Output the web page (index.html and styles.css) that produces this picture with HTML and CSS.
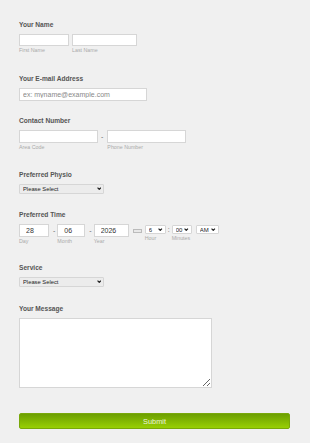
FILE: index.html
```html
<!DOCTYPE html>
<html lang="en">
<head>
  <meta charset="UTF-8">
  <title>Booking Form</title>
  <link rel="stylesheet" href="styles.css">
</head>
<body>
<div class="form">
  <div class="field">
    <div class="label">Your Name</div>
    <div class="row">
      <div class="col"><input class="txt w-first" type="text"><span class="sub">First Name</span></div>
      <div class="col"><input class="txt w-last" type="text"><span class="sub">Last Name</span></div>
    </div>
  </div>

  <div class="field mt-email">
    <div class="label">Your E-mail Address</div>
    <input class="txt w-email" type="text" placeholder="ex: myname@example.com">
  </div>

  <div class="field mt-phone">
    <div class="label">Contact Number</div>
    <div class="row">
      <div class="col"><input class="txt w-phone" type="text"><span class="sub">Area Code</span></div>
      <span class="sep">-</span>
      <div class="col"><input class="txt w-phone" type="text"><span class="sub">Phone Number</span></div>
    </div>
  </div>

  <div class="field mt-physio">
    <div class="label">Preferred Physio</div>
    <div class="sel">
      <select class="pick w-pick"><option>Please Select</option></select>
      <svg class="chev" viewBox="0 0 8 5"><path d="M1 1 L4 4 L7 1"/></svg>
    </div>
  </div>

  <div class="field mt-time">
    <div class="label">Preferred Time</div>
    <div class="row">
      <div class="col"><input class="txt num w-day" type="text" value="28"><span class="sub">Day</span></div>
      <span class="sep sep-date">-</span>
      <div class="col"><input class="txt num w-month" type="text" value="06"><span class="sub">Month</span></div>
      <span class="sep sep-date">-</span>
      <div class="col"><input class="txt num w-year" type="text" value="2026"><span class="sub">Year</span></div>
      <span class="cal"></span>
      <div class="col hour">
        <div class="sel">
          <select class="pick small w-hour"><option>6</option></select>
          <svg class="chev" viewBox="0 0 8 5"><path d="M1 1 L4 4 L7 1"/></svg>
        </div>
        <span class="sub">Hour</span>
      </div>
      <span class="sep sep-colon">:</span>
      <div class="col">
        <div class="sel">
          <select class="pick small w-min"><option>00</option></select>
          <svg class="chev" viewBox="0 0 8 5"><path d="M1 1 L4 4 L7 1"/></svg>
        </div>
        <span class="sub">Minutes</span>
      </div>
      <div class="col ampm">
        <div class="sel">
          <select class="pick small w-ampm"><option>AM</option></select>
          <svg class="chev" viewBox="0 0 8 5"><path d="M1 1 L4 4 L7 1"/></svg>
        </div>
      </div>
    </div>
  </div>

  <div class="field mt-service">
    <div class="label">Service</div>
    <div class="sel">
      <select class="pick w-pick"><option>Please Select</option></select>
      <svg class="chev" viewBox="0 0 8 5"><path d="M1 1 L4 4 L7 1"/></svg>
    </div>
  </div>

  <div class="field mt-message">
    <div class="label">Your Message</div>
    <textarea class="msg"></textarea>
  </div>

  <button class="submit" type="button">Submit</button>
</div>
</body>
</html>
```

FILE: styles.css
```css
* {
  box-sizing: border-box;
}

body {
  margin: 0;
  background: #f0f0f0;
  font-family: "Liberation Sans", Arial, sans-serif;
}

.form {
  padding: 21px 0 0 19px;
}

.label {
  font-size: 6.6px;
  font-weight: bold;
  color: #555;
  line-height: 8px;
  margin-bottom: 5px;
}

.mt-email { margin-top: 21px; }
.mt-phone { margin-top: 16px; }
.mt-physio { margin-top: 20px; }
.mt-time { margin-top: 17px; }
.mt-service { margin-top: 19px; }
.mt-message { margin-top: 18px; }

.row {
  display: flex;
  align-items: flex-start;
}

.col {
  display: flex;
  flex-direction: column;
  align-items: flex-start;
  margin-right: 3px;
}

.sub {
  font-size: 5.3px;
  color: #aaa;
  line-height: 7px;
  padding-top: 1px;
}

.txt {
  display: block;
  height: 13px;
  margin: 0;
  padding: 0 3px;
  border: 1px solid #d6d6d6;
  background: #fff;
  font-family: inherit;
  font-size: 7px;
  color: #333;
  outline: none;
}
.txt::placeholder {
  color: #888;
}
.num {
  padding: 0 6px;
}

.w-first { width: 50px; height: 12px; }
.w-last { width: 65px; height: 12px; }
.w-email { width: 128px; }
.w-phone { width: 79px; }
.w-day { width: 30px; }
.w-month { width: 28px; }
.w-year { width: 35px; }

.sep {
  font-size: 7px;
  color: #666;
  line-height: 13px;
  margin: 0 4px 0 0;
}
.sep-date {
  margin: 0 2px 0 1px;
}
.sep-colon {
  margin: 0 2px 0 0;
  line-height: 11px;
}

.cal {
  width: 9px;
  height: 4px;
  margin: 5px 3px 0 1px;
  border: 1px solid #bbb;
  background: #e8e8e8;
}

.sel {
  position: relative;
  display: block;
  width: fit-content;
}

.pick {
  display: block;
  height: 10px;
  margin: 0;
  padding: 0 2px 0 3px;
  border: 1px solid #d6d6d6;
  border-radius: 1px;
  background: #ececec;
  font-family: inherit;
  font-size: 5.8px;
  line-height: 8px;
  color: #222;
  appearance: none;
  -webkit-appearance: none;
  outline: none;
}
.pick.small {
  height: 9px;
  margin-top: 1px;
  background: #fff;
  padding: 0 1px 0 3px;
  font-size: 6px;
}

.chev {
  position: absolute;
  right: 3px;
  top: 3px;
  width: 4.5px;
  height: 3px;
  fill: none;
  stroke: #222;
  stroke-width: 2.2;
  pointer-events: none;
}
.small + .chev {
  top: 4px;
}

.w-pick { width: 85px; }
.w-hour { width: 21px; }
.w-min { width: 20px; }
.w-ampm { width: 23px; }
.hour { margin-right: 2px; }
.ampm { margin-left: 1px; }

.msg {
  display: block;
  width: 193px;
  height: 70px;
  margin: 0;
  border: 1px solid #d6d6d6;
  background: #fff;
  resize: both;
}

.submit {
  display: block;
  width: 271px;
  height: 16px;
  margin-top: 25px;
  padding: 0;
  border: 1px solid #79a80a;
  border-radius: 2px;
  background: linear-gradient(#6c9f00, #98d004);
  font-family: inherit;
  font-size: 7.4px;
  color: #eef4dc;
}
```
